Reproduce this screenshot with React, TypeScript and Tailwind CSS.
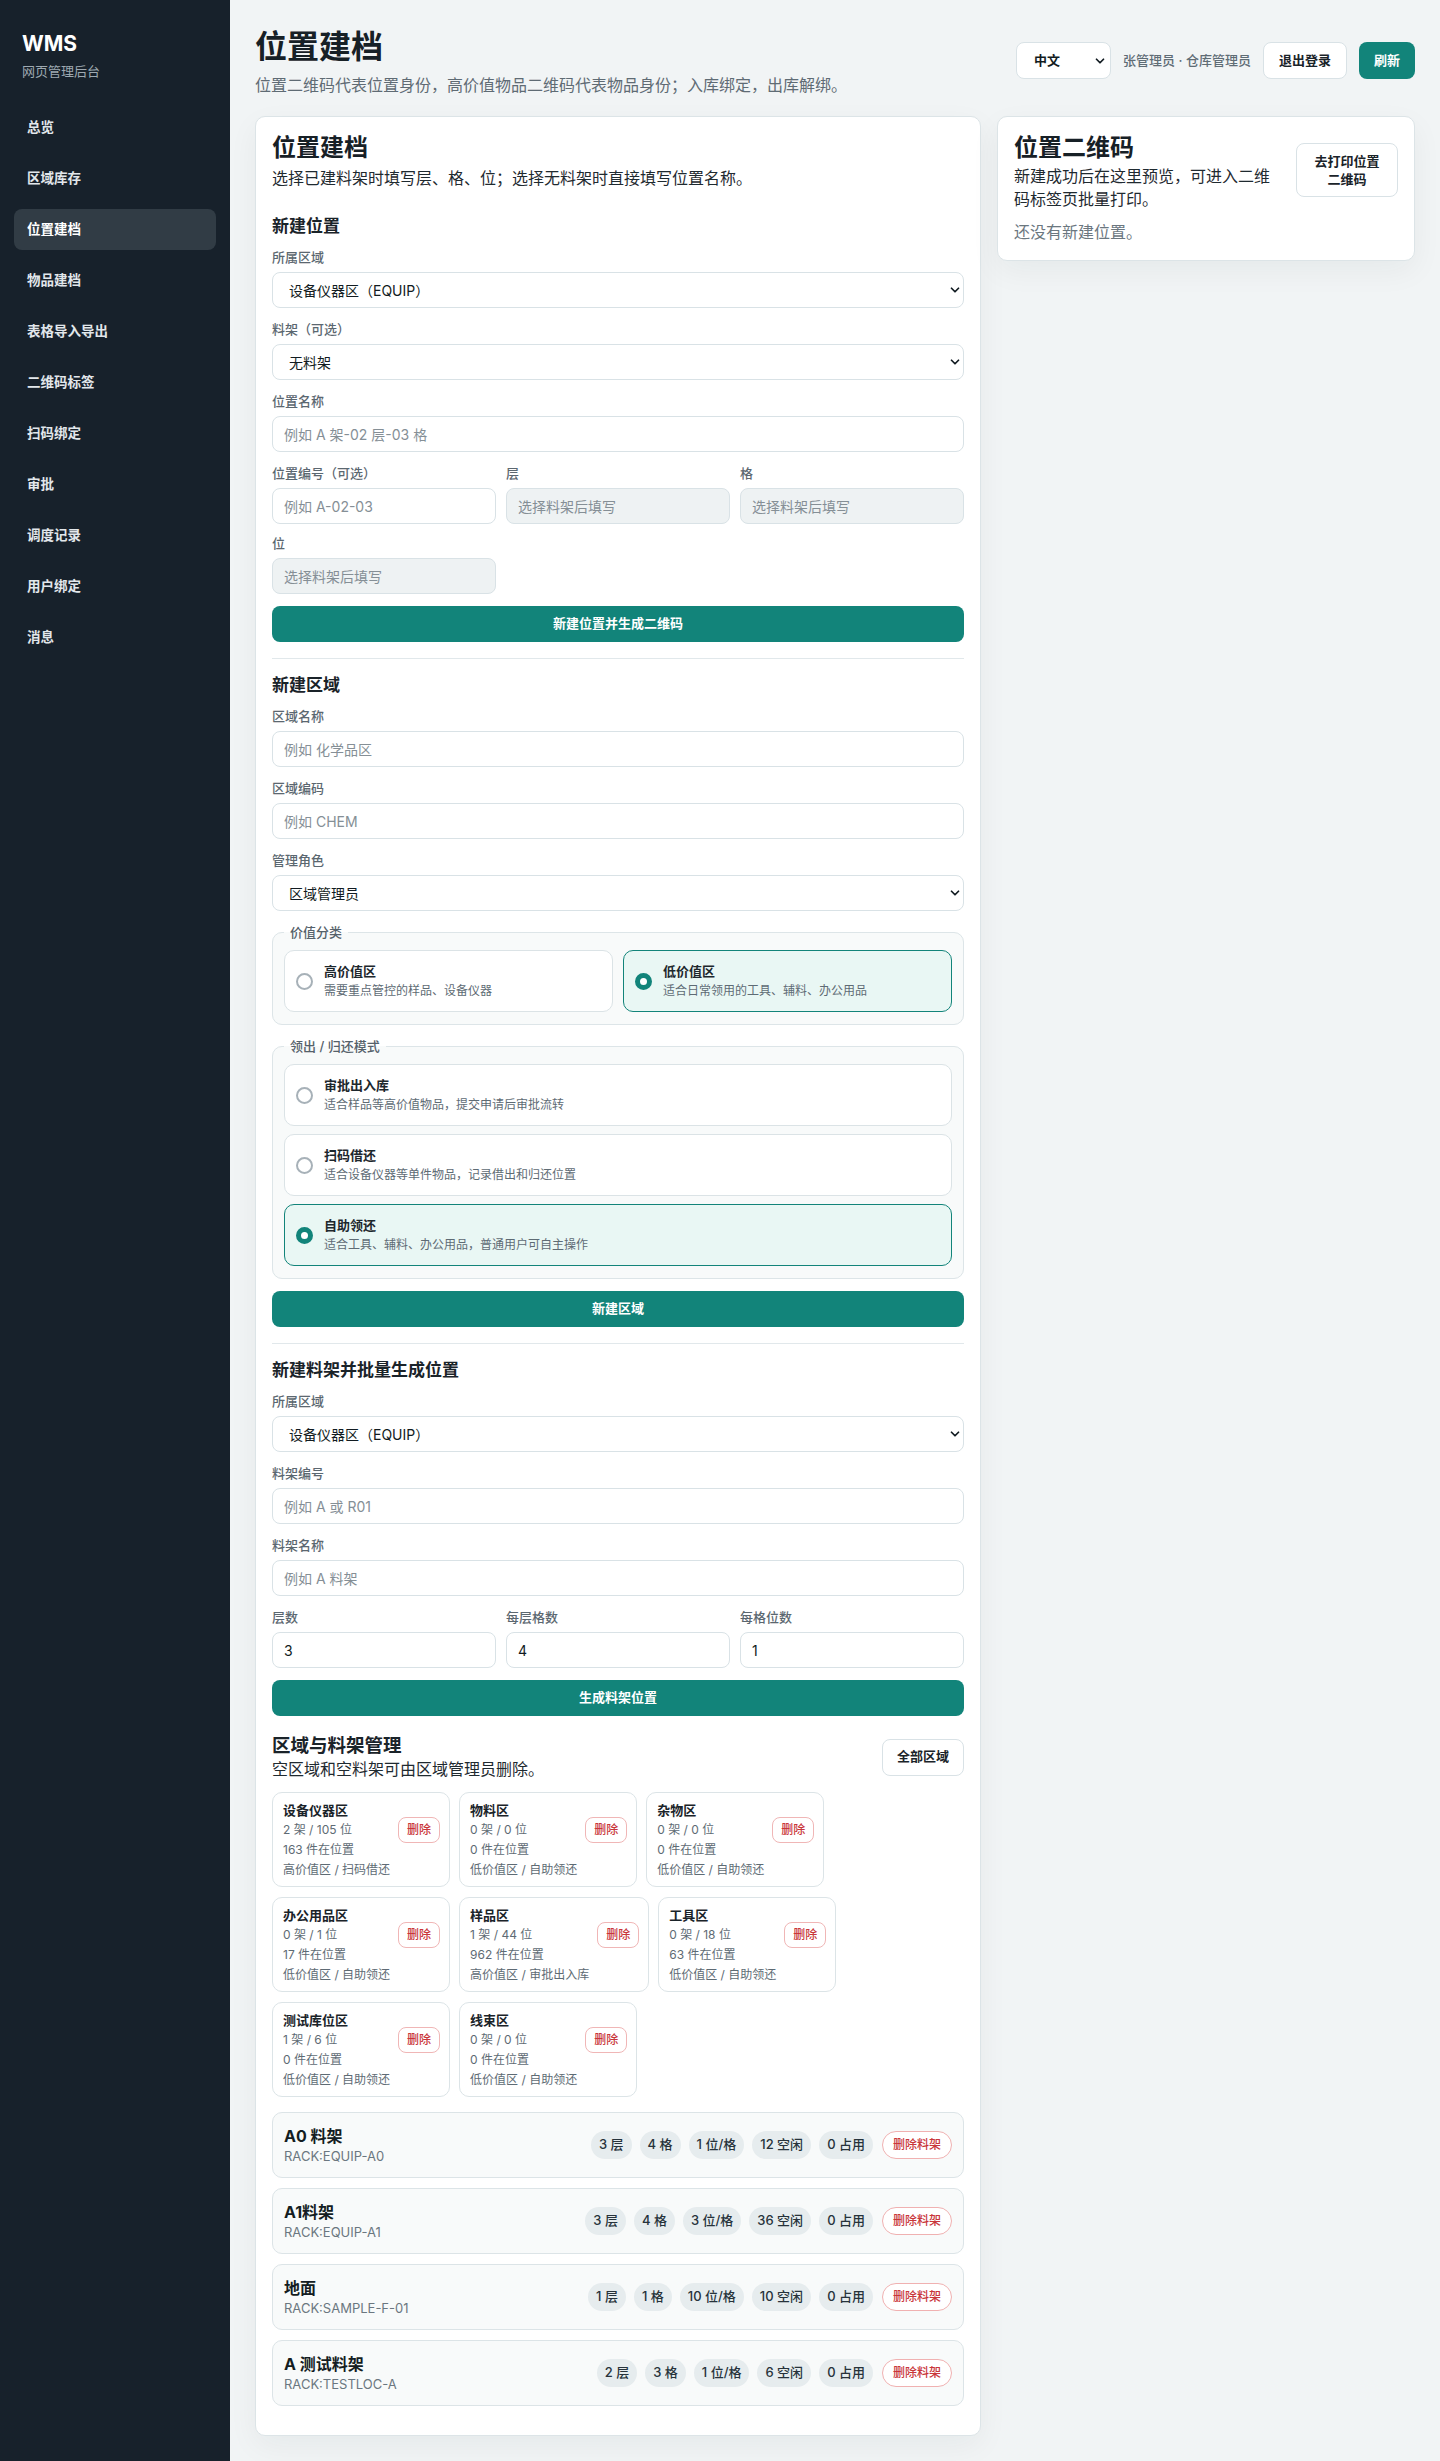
import { ReactNode } from 'react'
import { ChevronDown } from 'lucide-react'

const navItems = ['总览', '区域库存', '位置建档', '物品建档', '表格导入导出', '二维码标签', '扫码绑定', '审批', '调度记录', '用户绑定', '消息']

interface Zone {
  name: string
  counts: string
  stored: string
  mode: string
}

const zones: Zone[] = [
  { name: '设备仪器区', counts: '2 架 / 105 位', stored: '163 件在位置', mode: '高价值区 / 扫码借还' },
  { name: '物料区', counts: '0 架 / 0 位', stored: '0 件在位置', mode: '低价值区 / 自助领还' },
  { name: '杂物区', counts: '0 架 / 0 位', stored: '0 件在位置', mode: '低价值区 / 自助领还' },
  { name: '办公用品区', counts: '0 架 / 1 位', stored: '17 件在位置', mode: '低价值区 / 自助领还' },
  { name: '样品区', counts: '1 架 / 44 位', stored: '962 件在位置', mode: '高价值区 / 审批出入库' },
  { name: '工具区', counts: '0 架 / 18 位', stored: '63 件在位置', mode: '低价值区 / 自助领还' },
  { name: '测试库位区', counts: '1 架 / 6 位', stored: '0 件在位置', mode: '低价值区 / 自助领还' },
  { name: '线束区', counts: '0 架 / 0 位', stored: '0 件在位置', mode: '低价值区 / 自助领还' },
]

interface Rack {
  name: string
  code: string
  chips: string[]
}

const racks: Rack[] = [
  { name: 'A0 料架', code: 'RACK:EQUIP-A0', chips: ['3 层', '4 格', '1 位/格', '12 空闲', '0 占用'] },
  { name: 'A1料架', code: 'RACK:EQUIP-A1', chips: ['3 层', '4 格', '3 位/格', '36 空闲', '0 占用'] },
  { name: '地面', code: 'RACK:SAMPLE-F-01', chips: ['1 层', '1 格', '10 位/格', '10 空闲', '0 占用'] },
  { name: 'A 测试料架', code: 'RACK:TESTLOC-A', chips: ['2 层', '3 格', '1 位/格', '6 空闲', '0 占用'] },
]

function Sidebar() {
  return (
    <aside className="w-[230px] shrink-0 bg-[#17212b] px-[14px] pt-[32px]">
      <div className="px-2">
        <div className="text-[21px] font-bold leading-[24px] text-white">WMS</div>
        <div className="mt-[6px] text-[13px] leading-[18px] text-[#9ea9b1]">网页管理后台</div>
      </div>
      <nav className="mt-[27px] flex flex-col gap-[10px]">
        {navItems.map((item) => (
          <div
            key={item}
            className={`flex h-[41px] items-center rounded-lg px-[13px] text-[13.5px] font-bold ${
              item === '位置建档' ? 'bg-[#313c45] text-white' : 'text-[#e2e7eb]'
            }`}
          >
            {item}
          </div>
        ))}
      </nav>
    </aside>
  )
}

function Field({ label, children }: { label: string; children: ReactNode }) {
  return (
    <div className="flex flex-col gap-[6px]">
      <label className="text-[13px] font-medium leading-[18px] text-[#5b6770]">{label}</label>
      {children}
    </div>
  )
}

function TextInput({ placeholder, value, disabled }: { placeholder?: string; value?: string; disabled?: boolean }) {
  return (
    <input
      type="text"
      placeholder={placeholder}
      defaultValue={value}
      disabled={disabled}
      className={`h-9 w-full rounded-lg border border-[#d9e2e6] px-[11px] text-[14px] text-[#111b21] outline-none placeholder:text-[#858f96] ${
        disabled ? 'bg-[#eef2f3]' : 'bg-white'
      }`}
    />
  )
}

function SelectBox({ options }: { options: string[] }) {
  return (
    <div className="relative">
      <select className="h-9 w-full appearance-none rounded-lg border border-[#d9e2e6] bg-white pl-4 pr-6 text-[14px] text-[#111b21] outline-none">
        {options.map((o) => (
          <option key={o}>{o}</option>
        ))}
      </select>
      <ChevronDown size={14} strokeWidth={3} className="pointer-events-none absolute right-[2px] top-1/2 -translate-y-1/2 text-[#111b21]" />
    </div>
  )
}

function PrimaryButton({ children }: { children: ReactNode }) {
  return (
    <button className="h-9 w-full rounded-lg bg-[#12847a] text-[13px] font-bold text-white">{children}</button>
  )
}

function SectionTitle({ children }: { children: ReactNode }) {
  return <h3 className="text-[17px] font-bold leading-[24px] text-[#1a2329]">{children}</h3>
}

function Radio({ checked }: { checked: boolean }) {
  return checked ? (
    <span className="h-[17px] w-[17px] shrink-0 rounded-full border-[5px] border-[#12847a] bg-white" />
  ) : (
    <span className="h-[17px] w-[17px] shrink-0 rounded-full border-2 border-[#a7b1b8] bg-white" />
  )
}

function Option({ title, desc, checked }: { title: string; desc: string; checked: boolean }) {
  return (
    <div
      className={`flex items-center gap-[11px] rounded-[10px] border px-[11px] py-[11px] ${
        checked ? 'border-[#12847a] bg-[#e9f7f4]' : 'border-[#dbe3e6] bg-white'
      }`}
    >
      <Radio checked={checked} />
      <div>
        <div className="text-[13px] font-bold leading-[18px] text-[#1d272d]">{title}</div>
        <div className="mt-[2px] text-[12px] leading-[18px] text-[#5e6b74]">{desc}</div>
      </div>
    </div>
  )
}

function Group({ legend, children }: { legend: string; children: ReactNode }) {
  return (
    <fieldset className="rounded-[10px] border border-[#dde5e8] bg-[#f8fafa] px-[11px] pb-3 pt-[9px]">
      <legend className="px-[6px] text-[13px] font-medium leading-[18px] text-[#55616a]">{legend}</legend>
      {children}
    </fieldset>
  )
}

function Divider() {
  return <div className="mt-4 h-px bg-[#e1e8eb]" />
}

function ZoneCard({ zone }: { zone: Zone }) {
  return (
    <div className="flex items-start gap-2 rounded-[10px] border border-[#dce4e7] bg-white pb-[6px] pl-[10px] pr-[9px] pt-[7px]">
      <div className="flex flex-col text-[12px] leading-[20px] text-[#5e6b74]">
        <div className="text-[13px] font-bold text-[#1a2329]">{zone.name}</div>
        <div>{zone.counts}</div>
        <div>{zone.stored}</div>
        <div>{zone.mode}</div>
      </div>
      <button className="mt-[17px] h-[26px] shrink-0 rounded-lg border border-[#f0b6b6] bg-white px-2 text-[12px] font-medium text-[#c9363a]">
        删除
      </button>
    </div>
  )
}

function RackRow({ rack }: { rack: Rack }) {
  return (
    <div className="flex items-center justify-between rounded-[10px] border border-[#dce4e7] bg-[#f8fafa] px-[11px] py-3">
      <div>
        <div className="text-[16px] font-bold leading-[22px] text-[#141d22]">{rack.name}</div>
        <div className="text-[13px] leading-[18px] text-[#6b7780]">{rack.code}</div>
      </div>
      <div className="flex items-center gap-2">
        {rack.chips.map((c, i) => (
          <span key={i} className="flex h-7 items-center rounded-full bg-[#e6ecee] px-2 text-[13px] font-medium text-[#27333b]">
            {c}
          </span>
        ))}
        <button className="ml-px h-7 rounded-full border border-[#f0b1b1] bg-white px-[10px] text-[12px] font-medium text-[#c9363a]">
          删除料架
        </button>
      </div>
    </div>
  )
}

function LocationForm() {
  return (
    <section className="rounded-[10px] border border-[#dce4e7] bg-white px-4 pb-[29px] pt-4 shadow-[0_10px_30px_rgba(23,33,43,0.05)]">
      <h2 className="text-[24px] font-bold leading-[30px] text-[#172026]">位置建档</h2>
      <p className="mt-[3px] text-[16px] leading-[24px] text-[#1f2a30]">选择已建料架时填写层、格、位；选择无料架时直接填写位置名称。</p>

      <div className="mt-6">
        <SectionTitle>新建位置</SectionTitle>
        <div className="mt-[10px] flex flex-col gap-3">
          <Field label="所属区域">
            <SelectBox options={['设备仪器区（EQUIP）']} />
          </Field>
          <Field label="料架（可选）">
            <SelectBox options={['无料架']} />
          </Field>
          <Field label="位置名称">
            <TextInput placeholder="例如 A 架-02 层-03 格" />
          </Field>
          <div className="grid grid-cols-3 gap-[10px]">
            <Field label="位置编号（可选）">
              <TextInput placeholder="例如 A-02-03" />
            </Field>
            <Field label="层">
              <TextInput placeholder="选择料架后填写" disabled />
            </Field>
            <Field label="格">
              <TextInput placeholder="选择料架后填写" disabled />
            </Field>
            <Field label="位">
              <TextInput placeholder="选择料架后填写" disabled />
            </Field>
          </div>
          <PrimaryButton>新建位置并生成二维码</PrimaryButton>
        </div>
      </div>
      <Divider />

      <div className="mt-[14px]">
        <SectionTitle>新建区域</SectionTitle>
        <div className="mt-[10px] flex flex-col gap-3">
          <Field label="区域名称">
            <TextInput placeholder="例如 化学品区" />
          </Field>
          <Field label="区域编码">
            <TextInput placeholder="例如 CHEM" />
          </Field>
          <Field label="管理角色">
            <SelectBox options={['区域管理员']} />
          </Field>
          <Group legend="价值分类">
            <div className="grid grid-cols-2 gap-[10px]">
              <Option title="高价值区" desc="需要重点管控的样品、设备仪器" checked={false} />
              <Option title="低价值区" desc="适合日常领用的工具、辅料、办公用品" checked />
            </div>
          </Group>
          <Group legend="领出 / 归还模式">
            <div className="flex flex-col gap-2">
              <Option title="审批出入库" desc="适合样品等高价值物品，提交申请后审批流转" checked={false} />
              <Option title="扫码借还" desc="适合设备仪器等单件物品，记录借出和归还位置" checked={false} />
              <Option title="自助领还" desc="适合工具、辅料、办公用品，普通用户可自主操作" checked />
            </div>
          </Group>
          <PrimaryButton>新建区域</PrimaryButton>
        </div>
      </div>
      <Divider />

      <div className="mt-[14px]">
        <SectionTitle>新建料架并批量生成位置</SectionTitle>
        <div className="mt-[10px] flex flex-col gap-3">
          <Field label="所属区域">
            <SelectBox options={['设备仪器区（EQUIP）']} />
          </Field>
          <Field label="料架编号">
            <TextInput placeholder="例如 A 或 R01" />
          </Field>
          <Field label="料架名称">
            <TextInput placeholder="例如 A 料架" />
          </Field>
          <div className="grid grid-cols-3 gap-[10px]">
            <Field label="层数">
              <TextInput value="3" />
            </Field>
            <Field label="每层格数">
              <TextInput value="4" />
            </Field>
            <Field label="每格位数">
              <TextInput value="1" />
            </Field>
          </div>
          <PrimaryButton>生成料架位置</PrimaryButton>
        </div>
      </div>

      {/* 区域与料架管理 */}
      <div className="mt-[17px] flex items-center justify-between">
        <div>
          <h3 className="text-[18.5px] font-bold leading-[24px] text-[#1a2329]">区域与料架管理</h3>
          <p className="text-[16px] leading-[24px] text-[#1f2a30]">空区域和空料架可由区域管理员删除。</p>
        </div>
        <button className="h-[37px] rounded-lg border border-[#d9e2e6] bg-white px-[14px] text-[13px] font-bold text-[#1a2329]">
          全部区域
        </button>
      </div>
      <div className="mt-[11px] flex flex-wrap gap-x-[9px] gap-y-[10px]">
        {zones.map((z) => (
          <ZoneCard key={z.name} zone={z} />
        ))}
      </div>
      <div className="mt-[15px] flex flex-col gap-[10px]">
        {racks.map((r) => (
          <RackRow key={r.code} rack={r} />
        ))}
      </div>
    </section>
  )
}

function QrPanel() {
  return (
    <aside className="rounded-[10px] border border-[#dce4e7] bg-white p-4 shadow-[0_10px_30px_rgba(23,33,43,0.05)]">
      <div className="flex items-start justify-between gap-4">
        <div>
          <h2 className="text-[24px] font-bold leading-[30px] text-[#172026]">位置二维码</h2>
          <p className="mt-[2px] text-[16px] leading-[23px] text-[#1f2a30]">新建成功后在这里预览，可进入二维码标签页批量打印。</p>
        </div>
        <button className="mt-[10px] w-[102px] shrink-0 rounded-lg border border-[#d9e2e6] bg-white px-3 py-2 text-[13px] font-bold leading-[18px] text-[#1a2329]">
          去打印位置二维码
        </button>
      </div>
      <p className="mt-[10px] text-[16px] leading-[23px] text-[#6b777f]">还没有新建位置。</p>
    </aside>
  )
}

export default function App() {
  return (
    <div className="flex min-h-screen bg-[#f1f4f5] font-[Inter,'Noto_Sans_CJK_SC',sans-serif]">
      <Sidebar />
      <main className="min-w-0 flex-1 px-[25px] pb-6 pt-[29px]">
        <header className="flex items-start justify-between">
          <div>
            <h1 className="text-[32px] font-bold leading-[36px] text-[#172026]">位置建档</h1>
            <p className="mt-[9px] text-[16px] leading-[22px] text-[#5f6b74]">
              位置二维码代表位置身份，高价值物品二维码代表物品身份；入库绑定，出库解绑。
            </p>
          </div>
          <div className="mt-[13px] flex items-center gap-3">
            <div className="relative">
              <select className="h-[37px] w-[95px] appearance-none rounded-lg border border-[#d9e2e6] bg-white pl-[17px] text-[13px] font-bold text-[#111b21] outline-none">
                <option>中文</option>
                <option>English</option>
              </select>
              <ChevronDown size={14} strokeWidth={3} className="pointer-events-none absolute right-[4px] top-1/2 -translate-y-1/2 text-[#111b21]" />
            </div>
            <span className="text-[13px] font-medium text-[#5f6c75]">张管理员 · 仓库管理员</span>
            <button className="h-[37px] rounded-lg border border-[#d9e2e6] bg-white px-[15px] text-[13px] font-bold text-[#1a2329]">
              退出登录
            </button>
            <button className="h-[37px] rounded-lg bg-[#12847a] px-[15px] text-[13px] font-bold text-white">刷新</button>
          </div>
        </header>
        <div className="mt-5 grid grid-cols-[minmax(0,1fr)_418px] items-start gap-4">
          <LocationForm />
          <QrPanel />
        </div>
      </main>
    </div>
  )
}
